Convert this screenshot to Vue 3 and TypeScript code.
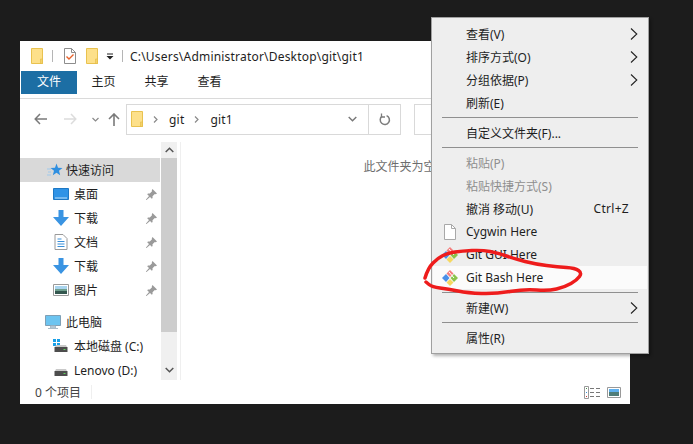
<script setup lang="ts">
interface NavItem {
  label: string
  icon: string
  pinned?: boolean
  top?: boolean
  gap?: boolean
}

interface MenuItem {
  label?: string
  sep?: boolean
  arrow?: boolean
  disabled?: boolean
  hint?: string
  icon?: string
  active?: boolean
}

const tabs = ['主页', '共享', '查看']

const navItems: NavItem[] = [
  { label: '桌面', icon: 'desktop', pinned: true },
  { label: '下载', icon: 'down', pinned: true },
  { label: '文档', icon: 'doc', pinned: true },
  { label: '下载', icon: 'down', pinned: true },
  { label: '图片', icon: 'pic', pinned: true },
  { label: '此电脑', icon: 'pc', top: true, gap: true },
  { label: '本地磁盘 (C:)', icon: 'diskc' },
  { label: 'Lenovo (D:)', icon: 'disk' },
]

const menu: MenuItem[] = [
  { label: '查看(V)', arrow: true },
  { label: '排序方式(O)', arrow: true },
  { label: '分组依据(P)', arrow: true },
  { label: '刷新(E)' },
  { sep: true },
  { label: '自定义文件夹(F)...' },
  { sep: true },
  { label: '粘贴(P)', disabled: true },
  { label: '粘贴快捷方式(S)', disabled: true },
  { label: '撤消 移动(U)', hint: 'Ctrl+Z' },
  { label: 'Cygwin Here', icon: 'file' },
  { label: 'Git GUI Here', icon: 'git' },
  { label: 'Git Bash Here', icon: 'git', active: true },
  { sep: true },
  { label: '新建(W)', arrow: true },
  { sep: true },
  { label: '属性(R)' },
]

// hand drawn ring round the Git Bash row
const ring: [number, number][] = [
  [425, 278], [428, 268], [438, 258], [448, 253], [462, 251], [482, 250], [498, 253],
  [515, 259], [535, 264], [558, 267], [575, 268], [582, 273], [577, 280], [565, 287],
  [548, 291], [525, 289], [495, 294], [468, 293], [448, 289], [432, 287], [426, 282],
]
const ringPath = ring.reduce((d, p, i) => {
  if (i === 0) return `M${p[0]} ${p[1]}`
  const next = ring[i + 1] ?? p
  return `${d}Q${p[0]} ${p[1]} ${(p[0] + next[0]) / 2} ${(p[1] + next[1]) / 2}`
}, '')
</script>

<template>
  <div class="desktop">
    <section class="explorer">
      <header class="titlebar">
        <svg class="t-folder" width="12" height="16" viewBox="0 0 12 16"><path d="M.5.5h11v15H.5z" fill="#fde08a" stroke="#e9c24f"/><path d="M9.500 11h2v4.500h-2z" fill="#f4d26a" stroke="#e3bb45" stroke-width=".6"/></svg>
        <i class="tsep"></i>
        <svg class="t-doc" width="12" height="16" viewBox="0 0 12 16"><path d="M.5.5h7l4 4v11H.5z" fill="#fff" stroke="#8d8d8d"/><path d="M7.500.5v4h4" fill="none" stroke="#8d8d8d"/><path d="M2.500 8.500l2.500 2.500L9.500 6.500" fill="none" stroke="#e8622a" stroke-width="1.400"/></svg>
        <svg class="t-folder2" width="12" height="16" viewBox="0 0 12 16"><path d="M.5.5h11v15H.5z" fill="#fde08a" stroke="#e9c24f"/><path d="M9.500 11h2v4.500h-2z" fill="#f4d26a" stroke="#e3bb45" stroke-width=".6"/></svg>
        <svg class="qa" width="8" height="8" viewBox="0 0 8 8"><path d="M1 1.500h6v1H1zM.5 4h7L4 7.500z" fill="#222"/></svg>
        <i class="tsep last"></i>
        <span class="path">C:\Users\Administrator\Desktop\git\git1</span>
      </header>

      <nav class="ribbon">
        <span class="file-tab">文件</span>
        <span v-for="tab in tabs" :key="tab" class="tab">{{ tab }}</span>
      </nav>

      <div class="toolbar">
        <svg class="back" width="13" height="12" viewBox="0 0 13 12"><path d="M6 1L1.200 6 6 11M1.500 6H13" fill="none" stroke="#7a7a7a" stroke-width="1.500"/></svg>
        <svg class="forward" width="13" height="12" viewBox="0 0 13 12"><path d="M7 1l4.800 5L7 11M11.500 6H0" fill="none" stroke="#dcdcdc" stroke-width="1.500"/></svg>
        <svg class="recent" width="7" height="5" viewBox="0 0 7 5"><path d="M.5 1L3.500 4 6.500 1" fill="none" stroke="#8a8a8a" stroke-width="1.200"/></svg>
        <svg class="up" width="12" height="13" viewBox="0 0 12 13"><path d="M1 6l5-5 5 5M6 1.500V13" fill="none" stroke="#7a7a7a" stroke-width="1.600"/></svg>
        <div class="address">
          <svg width="12" height="16" viewBox="0 0 12 16"><path d="M.5.5h11v15H.5z" fill="#fde08a" stroke="#e9c24f"/><path d="M9.500 11h2v4.500h-2z" fill="#f4d26a" stroke="#e3bb45" stroke-width=".6"/></svg>
          <svg class="crumb" width="5" height="7" viewBox="0 0 5 7"><path d="M1 .5l3 3-3 3" fill="none" stroke="#8a8a8a" stroke-width="1.200"/></svg>
          <span>git</span>
          <svg class="crumb" width="5" height="7" viewBox="0 0 5 7"><path d="M1 .5l3 3-3 3" fill="none" stroke="#8a8a8a" stroke-width="1.200"/></svg>
          <span>git1</span>
          <svg class="drop" width="9" height="6" viewBox="0 0 9 6"><path d="M.7 1l3.800 3.800L8.300 1" fill="none" stroke="#777" stroke-width="1.400"/></svg>
          <div class="refresh">
            <svg width="12" height="13" viewBox="0 0 12 13"><path d="M7.600 2.600A4.600 4.600 0 1 1 3 3.200" fill="none" stroke="#7d7d7d" stroke-width="1.500"/><path d="M2.500.5v3.500H6" fill="none" stroke="#7d7d7d" stroke-width="1.300"/></svg>
          </div>
        </div>
        <div class="search"></div>
      </div>

      <div class="body">
        <aside class="side">
          <div class="tree">
            <div class="row quick">
              <svg width="16" height="15" viewBox="0 0 16 15"><path d="M9.500.5l1.500 4.200 4.500.2-3.500 2.800 1.200 4.500-3.700-2.500-3.700 2.500 1.200-4.500L3.500 4.900l4.500-.2z" fill="#2f8fe0"/><path d="M0 6h4M1 9h3M0 12h4" stroke="#9fc9ec" stroke-width="1"/></svg>
              <span>快速访问</span>
            </div>
            <div
              v-for="(item, i) in navItems"
              :key="i"
              class="row"
              :class="{ child: !item.top, spaced: item.gap }"
            >
              <svg v-if="item.icon === 'desktop'" width="16" height="14" viewBox="0 0 16 14"><path d="M.5 1.500h15v11H.5z" fill="#2f93e6" stroke="#1e78c4"/><path d="M2 11h12" stroke="#bfe0f8"/></svg>
              <svg v-else-if="item.icon === 'down'" width="16" height="16" viewBox="0 0 16 16"><path d="M5.500 0h5v7H16l-8 9-8-9h5.500z" fill="#3a94e2"/></svg>
              <svg v-else-if="item.icon === 'doc'" width="16" height="16" viewBox="-1.500 0 16 16"><path d="M.5.500h8l4 4v11H.5z" fill="#fff" stroke="#9a9a9a"/><path d="M3 5h4M3 7.500h7M3 10h7M3 12.500h7" stroke="#3a8fd8"/></svg>
              <svg v-else-if="item.icon === 'pic'" width="16" height="12" viewBox="0 0 16 12"><path d="M.5.500h15v11H.5z" fill="#fff" stroke="#9a9a9a"/><path d="M2 2h12v3H2z" fill="#a9d4ee"/><path d="M2 5h12v2H2z" fill="#6f9f8e"/><path d="M2 7h12v3H2z" fill="#33574f"/></svg>
              <svg v-else-if="item.icon === 'pc'" width="16" height="15" viewBox="0 0 16 15"><path d="M.5.500h15v10H.5z" fill="#6cc4f0" stroke="#7f9fb5"/><path d="M5.500 11h5v2h-5zM3 13.500h10" fill="#bcd0dd" stroke="#a9bcc9"/></svg>
              <svg v-else width="16" height="14" viewBox="0 0 16 14"><g v-if="item.icon === 'diskc'" fill="#18a0e8"><path d="M0 0h3v3H0zM4 0h3v3H4zM0 4h3v3H0zM4 4h3v3H4z"/></g><path d="M2 8l1-2h10l1 2z" fill="#c9c9c9"/><path d="M1.500 8h13v5h-13z" fill="#4d4d4d"/><path d="M10.500 10h2v1h-2z" fill="#5fd35f"/></svg>
              <span>{{ item.label }}</span>
              <svg v-if="item.pinned" class="pin" width="11" height="11" viewBox="0 0 11 11"><path d="M6.500 0L11 4.500 9.800 5.200 8.800 5 6.500 7.200 6.600 9 5.800 9.800 1.200 5.200 2 4.400 3.800 4.500 6 2.200 5.800 1.200zM3 7l1 1-3.500 3H0v-.5z" fill="#9a9a9a"/></svg>
            </div>
          </div>
          <div class="scrollbar">
            <div class="sb-btn"><svg width="9" height="6" viewBox="0 0 9 6"><path d="M.7 5l3.800-3.800L8.300 5" fill="none" stroke="#555" stroke-width="1.500"/></svg></div>
            <div class="thumb"></div>
            <div class="sb-btn end"><svg width="9" height="6" viewBox="0 0 9 6"><path d="M.7 1l3.800 3.800L8.300 1" fill="none" stroke="#555" stroke-width="1.500"/></svg></div>
          </div>
        </aside>
        <main class="content">此文件夹为空。</main>
      </div>

      <footer class="status">
        <span>0 个项目</span>
        <i class="status-sep"></i>
        <svg class="view" width="16" height="13" viewBox="0 0 16 13"><path d="M.5.500h4v12h-4z" fill="#fff" stroke="#999"/><path d="M2 2h1v1H2z" fill="#4a8f4a"/><path d="M2 6h1v1H2z" fill="#3a8fd8"/><path d="M2 10h1v1H2z" fill="#c83a3a"/><path d="M6 2.500h4M12 2.500h4M6 6.500h4M12 6.500h4M6 10.500h4M12 10.500h4" stroke="#777"/></svg>
        <svg class="view big" width="14" height="11" viewBox="0 0 14 11"><path d="M.5.500h13v10H.5z" fill="#fff" stroke="#999"/><path d="M2 2h10v3H2z" fill="#5fb0ee"/><path d="M2 5h10v4H2z" fill="#4f7d78"/></svg>
      </footer>
    </section>

    <section class="menu">
      <template v-for="(item, i) in menu" :key="i">
        <div v-if="item.sep" class="menu-sep"></div>
        <div v-else class="menu-item" :class="{ disabled: item.disabled, active: item.active }">
          <span class="menu-icon">
            <svg v-if="item.icon === 'file'" width="12" height="16" viewBox="0 0 12 16"><path d="M.5.500h7l4 4v11H.5z" fill="#fff" stroke="#a8a8a8"/><path d="M7.500.5v4h4" fill="none" stroke="#a8a8a8"/></svg>
            <svg v-else-if="item.icon === 'git'" width="16" height="16" viewBox="0 0 16 16"><path d="M8 0l3.500 3.500L8 7 4.500 3.500z" fill="#f47c7c"/><path d="M12 4l4 4-4 4-3.500-4z" fill="#8bc34a"/><path d="M4 4l3.500 4L4 12 0 8z" fill="#4a90e8"/><path d="M8 9l3.500 3.500L8 16l-3.500-3.500z" fill="#f6d860"/><path d="M7 2l5 6" stroke="#fff" stroke-width="1"/></svg>
          </span>
          <span class="menu-label">{{ item.label }}</span>
          <span v-if="item.hint" class="menu-hint">{{ item.hint }}</span>
          <svg v-if="item.arrow" class="menu-arrow" width="8" height="12" viewBox="0 0 8 12"><path d="M1 .5L6.800 6 1 11.500" fill="none" stroke="#222" stroke-width="1.100"/></svg>
        </div>
      </template>
    </section>

    <svg class="scribble" width="693" height="444" viewBox="0 0 693 444">
      <path :d="ringPath" fill="none" stroke="#ee1c1c" stroke-width="3.500" stroke-linecap="round" stroke-linejoin="round"/>
    </svg>
  </div>
</template>

<style>
html, body { margin: 0; background: #1c1c1c; }
</style>

<style scoped>
.desktop {
  position: relative;
  width: 693px;
  height: 444px;
  overflow: hidden;
  background: #1c1c1c;
  font-family: "Noto Sans", "Noto Sans CJK SC", sans-serif;
  font-size: 12px;
  color: #1e1e1e;
}
svg { display: block; flex: none; }

.explorer {
  position: absolute;
  left: 20px;
  top: 41px;
  width: 610px;
  height: 363px;
  background: #fff;
  display: flex;
  flex-direction: column;
}
.titlebar {
  height: 30px;
  display: flex;
  align-items: center;
  padding-left: 11px;
  flex: none;
}
.tsep { width: 1px; height: 12px; background: #b5b5b5; margin: 0 11px 0 9px; }
.tsep.last { margin: 0 7px 0 8px; }
.t-folder2 { margin-left: 10px; }
.qa { margin-left: 8px; }
.path { line-height: 16px; padding-top: 2px; letter-spacing: 0.2px; }
.ribbon {
  height: 28px;
  flex: none;
  display: flex;
  align-items: flex-start;
  border-bottom: 1px solid #dadada;
  box-sizing: border-box;
  padding-left: 1px;
}
.file-tab {
  width: 56px;
  height: 23px;
  line-height: 22px;
  text-align: center;
  background: #1c6ea4;
  color: #fff;
}
.tab { width: 53px; height: 23px; line-height: 22px; text-align: center; }
.toolbar {
  height: 38px;
  flex: none;
  display: flex;
  align-items: center;
  padding-top: 2px;
  box-sizing: border-box;
}
.back { margin-left: 14px; }
.forward { margin-left: 17px; }
.recent { margin-left: 15px; }
.up { margin-left: 9px; }
.address {
  margin-left: 6px;
  width: 275px;
  height: 31px;
  box-sizing: border-box;
  border: 1px solid #d9d9d9;
  display: flex;
  align-items: center;
  padding-left: 4px;
  letter-spacing: 0.2px;
}
.crumb { margin: 0 10px 0 10px; }
.address span { margin-left: 1px; }
.drop { margin-left: auto; margin-right: 11px; }
.refresh {
  width: 31px;
  height: 29px;
  border-left: 1px solid #d9d9d9;
  display: flex;
  align-items: center;
  justify-content: center;
}
.search {
  margin-left: 13px;
  width: 215px;
  height: 31px;
  box-sizing: border-box;
  border: 1px solid #d9d9d9;
}
.body { flex: 1; display: flex; min-height: 0; padding-top: 5px; }
.side { width: 160px; flex: none; display: flex; border-right: 1px solid #efefef; }
.tree { width: 140px; padding-top: 16px; }
.row {
  height: 24px;
  display: flex;
  align-items: center;
  padding-left: 25px;
  gap: 5px;
  position: relative;
}
.row.quick { background: #d9d9d9; gap: 3px; padding-left: 27px; }
.row.child { padding-left: 33px; gap: 5px; }
.row.spaced { margin-top: 8px; }
.pin { position: absolute; right: 3px; top: 7px; }
.scrollbar {
  width: 16px;
  margin-left: 1px;
  background: #f0f0f0;
  display: flex;
  flex-direction: column;
  align-items: center;
}
.sb-btn { height: 16px; display: flex; align-items: center; justify-content: center; }
.sb-btn.end { margin-top: auto; padding-bottom: 2px; }
.thumb { height: 174px; width: 100%; background: #cdcdcd; }
.content {
  flex: 1;
  text-align: center;
  padding-top: 15px;
  color: #6d6d6d;
}
.status {
  height: 24px;
  flex: none;
  display: flex;
  align-items: center;
  padding-left: 15px;
  color: #444;
}
.status-sep { width: 1px; height: 14px; background: #efefef; margin-left: 10px; }
.view { margin-left: auto; }
.view.big { margin-left: 7px; margin-right: 9px; }

.menu {
  position: absolute;
  left: 431px;
  top: 17px;
  width: 218px;
  height: 337px;
  box-sizing: border-box;
  background: #eeeeee;
  border: 1px solid #a0a0a0;
  box-shadow: 2px 2px 3px rgba(0, 0, 0, 0.3);
  padding: 4px 1px;
}
.menu-item {
  height: 23px;
  display: flex;
  align-items: center;
  position: relative;
}
.menu-item.disabled { color: #8f8f8f; }
.menu-item.active { background: #fbfbfb; }
.menu-icon { width: 33px; display: flex; justify-content: center; }
.menu-hint { margin-left: auto; margin-right: 18px; letter-spacing: 0.3px; }
.menu-arrow { margin-left: auto; margin-right: 9px; }
.menu-sep { height: 1px; background: #8f8f8f; margin: 3px 9px; }

.scribble { position: absolute; left: 0; top: 0; pointer-events: none; }
</style>
